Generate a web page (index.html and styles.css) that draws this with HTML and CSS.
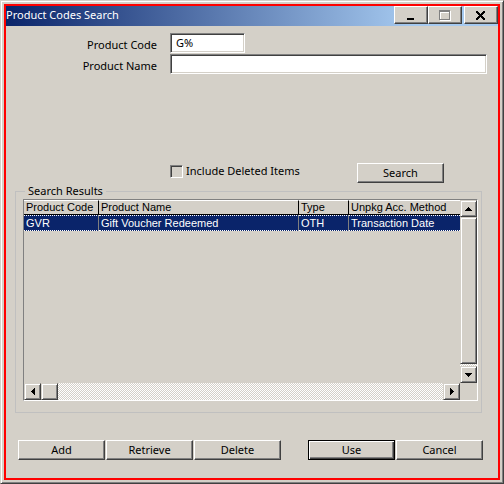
FILE: index.html
```html
<!DOCTYPE html>
<html lang="en">
<head>
<meta charset="utf-8">
<title>Product Codes Search</title>
<link rel="stylesheet" href="styles.css">
</head>
<body>
<div class="window">
  <div class="frame">
    <header class="titlebar">
      <h1 class="title">Product Codes Search</h1>
      <div class="controls">
        <button class="control" type="button" aria-label="Minimize">
          <svg width="14" height="12" shape-rendering="crispEdges"><path d="M3 9h7v2H3z" fill="#000"/></svg>
        </button>
        <button class="control" type="button" aria-label="Maximize" disabled>
          <svg width="14" height="12" shape-rendering="crispEdges"><path d="M2 2h11v10H2zM3 4v7h9V4z" fill="#fff" fill-rule="evenodd"/><path d="M1 1h11v10H1zM2 3v7h9V3z" fill="#808080" fill-rule="evenodd"/></svg>
        </button>
        <button class="control control-close" type="button" aria-label="Close">
          <svg width="14" height="12" shape-rendering="crispEdges"><path d="M2 2h2v1h1v1h1v1h1V4h1V3h1V2h2v2h-1v1H9v1H8v1h1v1h1v1h1v2H9v-1H8V9H7V8H6v1H5v1H4v1H2V9h1V8h1V7h1V6H4V5H3V4H2z" fill="#000"/></svg>
        </button>
      </div>
    </header>
    <form class="content" onsubmit="return false">
      <div class="fields">
        <label for="code">Product Code</label>
        <input class="text short" id="code" type="text" value="G%">
        <label for="name">Product Name</label>
        <input class="text" id="name" type="text">
      </div>
      <div class="search-row">
        <label class="check"><input type="checkbox">Include Deleted Items</label>
        <button class="button" type="submit">Search</button>
      </div>
      <fieldset class="results">
        <legend>Search Results</legend>
        <div class="list">
          <div class="rows">
            <table>
              <colgroup><col class="col-code"><col><col class="col-type"><col class="col-method"></colgroup>
              <thead><tr><th>Product Code</th><th>Product Name</th><th>Type</th><th>Unpkg Acc. Method</th></tr></thead>
              <tbody><tr><td>GVR</td><td>Gift Voucher Redeemed</td><td>OTH</td><td>Transaction Date</td></tr></tbody>
            </table>
          </div>
          <div class="scroll vertical">
            <button class="arrow" type="button" aria-label="Scroll up"><svg width="7" height="4" shape-rendering="crispEdges"><path d="M3 0h1v1h1v1h1v1h1v1H0V3h1V2h1V1h1z"/></svg></button>
            <div class="thumb"></div>
            <button class="arrow" type="button" aria-label="Scroll down"><svg width="7" height="4" shape-rendering="crispEdges"><path d="M0 0h7v1H6v1H5v1H4v1H3V3H2V2H1V1H0z"/></svg></button>
          </div>
          <div class="scroll horizontal">
            <button class="arrow" type="button" aria-label="Scroll left"><svg width="4" height="7" shape-rendering="crispEdges"><path d="M3 0h1v7H3V6H2V5H1V4H0V3h1V2h1V1h1z"/></svg></button>
            <div class="thumb"></div>
            <button class="arrow" type="button" aria-label="Scroll right"><svg width="4" height="7" shape-rendering="crispEdges"><path d="M0 0h1v1h1v1h1v1h1v1H3v1H2v1H1v1H0z"/></svg></button>
          </div>
        </div>
      </fieldset>
      <div class="actions">
        <button class="button" type="button">Add</button>
        <button class="button" type="button">Retrieve</button>
        <button class="button" type="button">Delete</button>
        <button class="button default" type="button">Use</button>
        <button class="button" type="button">Cancel</button>
      </div>
    </form>
  </div>
</div>
</body>
</html>
```
FILE: styles.css
```css
:root {
  --face: #d4d0c8;
  --shade: #808080;
  --dark: #404040;
  --navy: #0a246a;
}

* { box-sizing: border-box; }

body {
  margin: 0;
  background: var(--face);
  color: #000;
  font: 11px/16px "Noto Sans", "Open Sans", sans-serif;
}

button, input { font: inherit; color: inherit; margin: 0; border-radius: 0; }

.window {
  display: flex;
  min-height: 100vh;
  padding: 3px;
  border: 1px solid;
  border-color: var(--face) var(--dark) var(--dark) var(--face);
  box-shadow: inset 1px 1px #fff, inset -1px -1px var(--shade);
}

.frame {
  flex: 1;
  min-width: 0;
  display: flex;
  flex-direction: column;
  border: 2px solid #f00;
}

.titlebar {
  display: flex;
  justify-content: space-between;
  height: 20px;
  background: linear-gradient(to right, var(--navy), #a6caf0 83%);
}

.title {
  margin: 0;
  font-size: 11px;
  line-height: 18px;
  font-weight: 400;
  color: #fff;
}

.controls { display: flex; }

.control, .button, .arrow, .thumb {
  padding: 0;
  background: var(--face);
  border: 1px solid;
  border-color: #fff var(--dark) var(--dark) #fff;
  box-shadow: inset -1px -1px var(--shade);
}

.control {
  display: flex;
  justify-content: center;
  width: 34px;
  height: 18px;
  padding-top: 2px;
}

.control-close { margin-left: 2px; }

.content {
  flex: 1;
  display: flex;
  flex-direction: column;
  padding: 7px 9px 18px;
}

.fields {
  display: grid;
  grid-template-columns: 142px 1fr;
  column-gap: 13px;
  row-gap: 1px;
  padding-right: 2px;
  line-height: 24px;
  text-align: right;
}

.fields label { height: 20px; white-space: nowrap; }

.text {
  width: 100%;
  height: 20px;
  padding: 0 5px;
  background: #fff;
  border: 1px solid;
  border-color: var(--shade) #fff #fff var(--shade);
  box-shadow: inset 1px 1px var(--dark), inset -1px -1px var(--face);
}

.short { width: 75px; }

.search-row {
  display: flex;
  justify-content: space-between;
  margin: 89px 45px 0 155px;
}

.check {
  display: flex;
  align-items: center;
  gap: 3px;
  height: 16px;
}

.check input {
  appearance: none;
  width: 13px;
  height: 13px;
  border: 1px solid;
  border-color: var(--shade) #fff #fff var(--shade);
  box-shadow: inset 1px 1px var(--dark);
}

.button {
  width: 87px;
  height: 20px;
  line-height: 18px;
}

.default {
  border-color: #000;
  box-shadow: inset 1px 1px #fff, inset -1px -1px var(--dark), inset -2px -2px var(--shade);
}

.results {
  flex: 1;
  display: flex;
  min-width: 0;
  margin: 0 7px 0 0;
  padding: 0 3px 11px 7px;
  border: 1px solid #c0c0c0;
}

.results legend { margin-left: 2px; padding: 0 3px; height: 16px; }

.list {
  flex: 1;
  display: grid;
  grid-template: 1fr 17px / 1fr 17px;
  border: 1px solid;
  border-color: var(--shade) #fff #fff var(--shade);
}

.rows { min-width: 0; overflow: hidden; }

table {
  width: 100%;
  table-layout: fixed;
  border-collapse: separate;
  border-spacing: 0;
  font: 11px/14px "Liberation Sans", Arial, sans-serif;
}

.col-code { width: 75px; }
.col-type { width: 50px; }
.col-method { width: 111px; }

th, td {
  height: 16px;
  padding: 0 2px;
  text-align: left;
  font-weight: 400;
  white-space: nowrap;
  overflow: hidden;
}

th {
  height: 15px;
  line-height: 13px;
  border-top: 1px solid #fff;
  border-right: 1px solid #000;
  border-bottom: 1px solid #000;
}

td {
  background: var(--navy);
  color: #fff;
  border-block: 1px dotted #fff;
  border-right: 1px solid var(--shade);
}

th:last-child, td:last-child { border-right: 0; }

.scroll {
  display: flex;
  background: repeating-conic-gradient(#fff 0 25%, var(--face) 0 50%) 0 0 / 2px 2px;
}

.vertical { flex-direction: column; }
.vertical .thumb { flex: 1; margin-bottom: 2px; }
.horizontal .thumb { width: 17px; }
.horizontal .arrow:last-child { margin-left: auto; }

.arrow, .horizontal .thumb, .vertical .thumb {
  border-color: var(--face) var(--dark) var(--dark) var(--face);
  box-shadow: inset 1px 1px #fff, inset -1px -1px var(--shade);
}

.arrow {
  display: flex;
  align-items: center;
  justify-content: center;
  width: 17px;
  height: 17px;
}

.actions { display: flex; gap: 1px; margin: 27px 6px 0 3px; }
.actions .default { margin-left: auto; }
```
